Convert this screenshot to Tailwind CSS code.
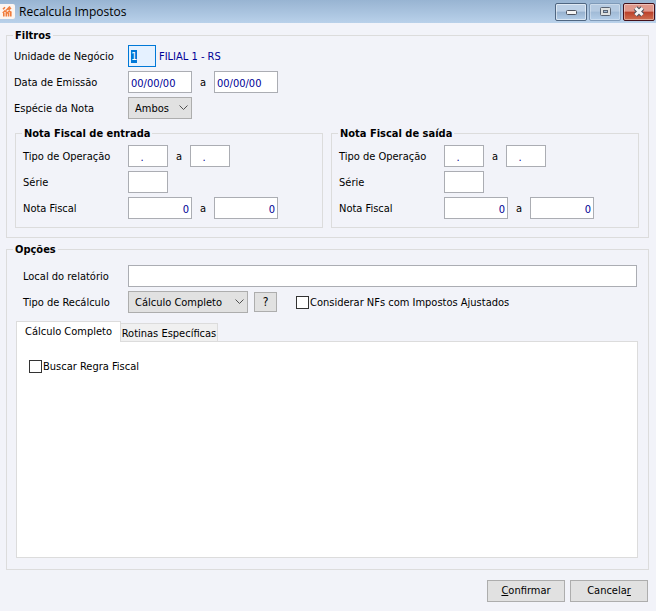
<!DOCTYPE html>
<html lang="pt-BR">
<head>
  <meta charset="UTF-8">
  <meta name="viewport" content="width=device-width, initial-scale=1.0">
  <title>Recalcula Impostos</title>
  <script src="https://cdn.jsdelivr.net/npm/@tailwindcss/browser@4"></script>
</head>
<body class="bg-[#f2f3f9] text-black text-[11px] leading-4 font-['DejaVu_Sans_Condensed','DejaVu_Sans',sans-serif] min-h-screen flex flex-col">

  <!-- Title bar -->
  <header class="h-[23px] shrink-0 flex items-center pr-px bg-linear-to-b from-[#98b4d2] to-[#b9d1ea]">
    <svg class="w-[15px] h-[15px] shrink-0" viewBox="0 0 15 15" aria-hidden="true">
      <rect x="-2" width="17" height="15" rx="2" fill="#fdf5f0"/>
      <g fill="none" stroke="#f07c3c" stroke-width="1.6">
        <path d="M3 5.2 L5 3.2 M6 6.5 L10 2.5 M8.5 6 L11 3.8"/>
        <path d="M2.8 9 L5 6.8 L7.3 9 L9.3 7 L11 8.5"/>
        <path d="M3.8 9 V12.5 M6.3 9 V12.5 M8.6 9 V12.5 M10.8 7.5 V12.5"/>
      </g>
    </svg>
    <h1 class="ml-1 flex-1 text-[12px] font-['Open_Sans',sans-serif]">Recalcula Impostos</h1>
    <div class="flex gap-[2px]">
      <button type="button" aria-label="Minimizar" class="w-8 h-[18px] rounded-[2px] border border-[#4f6681] inset-ring inset-ring-white/50 bg-linear-to-b from-[#bcd0e6] from-45% via-[#96b1ce] via-50% to-[#b4cee9] flex items-center justify-center">
        <svg class="w-3 h-3" viewBox="0 0 12 12"><rect x="1.5" y="4.5" width="10" height="4" rx="1" fill="#f4f4f4" stroke="#4d525e"/></svg>
      </button>
      <button type="button" aria-label="Maximizar" class="w-8 h-[18px] rounded-[2px] border border-[#7f9ab8] inset-ring inset-ring-white/30 bg-linear-to-b from-[#b5cae1] from-45% via-[#a0bad6] via-50% to-[#b4cee9] flex items-center justify-center">
        <svg class="w-3 h-3" viewBox="0 0 12 12">
          <rect x="1.5" y="1.5" width="10" height="8" rx="1" fill="#dfe1e0" stroke="#5a6472"/>
          <rect x="4.5" y="4.5" width="4" height="2" fill="#a0bad6" stroke="#5a6472"/>
        </svg>
      </button>
      <button type="button" aria-label="Fechar" class="w-8 h-[18px] rounded-[2px] border border-[#43101a] inset-ring inset-ring-white/40 bg-linear-to-b from-[#e0988c] from-45% via-[#bb3f29] via-50% to-[#cf6e50] flex items-center justify-center">
        <svg class="w-3 h-3" viewBox="0 0 12 12">
          <path d="M2.5 2 L9.5 9 M9.5 2 L2.5 9" stroke="#4d525e" stroke-width="5"/>
          <path d="M2.5 2 L9.5 9 M9.5 2 L2.5 9" stroke="#f6f6f6" stroke-width="3"/>
        </svg>
      </button>
    </div>
  </header>

  <form class="flex-1 flex flex-col pt-[3px]" onsubmit="return false">

    <fieldset class="ml-[6px] mr-[7px] border border-[#dcdcdc] pt-px pb-[9px] pl-[7px] pr-[9px]">
      <legend class="-ml-px px-[2px] pt-[2px] font-bold">Filtros</legend>

      <div class="grid gap-1">
        <div class="flex items-center">
          <label for="unidade" class="w-[114px] pt-[2px]">Unidade de Negócio</label>
          <input id="unidade" type="text" value="1" class="w-7 h-[22px] border border-[#0078d7] bg-[#e5f1ff] px-[2px] text-[#000096] outline-none selection:bg-[#0078d7] selection:text-white">
          <output for="unidade" class="ml-[3px] pt-[2px] text-[#000096]">FILIAL 1 - RS</output>
        </div>
        <div class="flex items-center">
          <label for="dataDe" class="w-[114px] pt-[2px]">Data de Emissão</label>
          <input id="dataDe" type="text" value="00/00/00" class="w-16 h-[22px] border border-[#abadb3] bg-white px-[2px] pt-[2px] text-[#000096] outline-none">
          <label for="dataAte" class="w-[22px] pt-[2px] text-center">a</label>
          <input id="dataAte" type="text" value="00/00/00" class="w-16 h-[22px] border border-[#abadb3] bg-white px-[2px] pt-[2px] text-[#000096] outline-none">
        </div>
        <div class="flex items-center">
          <label for="especie" class="w-[114px] pt-[2px]">Espécie da Nota</label>
          <div class="relative">
            <select id="especie" class="block w-16 h-[22px] appearance-none border border-[#adadad] bg-[#e1e1e1] pl-[6px] pt-[2px] outline-none">
              <option>Ambos</option>
              <option>Entrada</option>
              <option>Saída</option>
            </select>
            <svg class="absolute right-1 top-[8px] w-[9px] h-[6px] pointer-events-none" viewBox="0 0 9 6" fill="none" stroke="#505050"><path d="M0.5 0.5 L4.5 4.5 L8.5 0.5"/></svg>
          </div>
        </div>
      </div>

      <div class="grid grid-cols-2 gap-2 mt-[5px] ml-px">
        <fieldset class="border border-[#dcdcdc] pt-[3px] pb-2 px-[7px] min-w-0">
          <legend class="-ml-px px-[2px] pt-[2px] font-bold">Nota Fiscal de entrada</legend>
          <div class="grid gap-1">
            <div class="flex items-center">
              <label for="entOpDe" class="w-[105px] pt-[2px]">Tipo de Operação</label>
              <input id="entOpDe" type="text" value="   ." class="w-10 h-[22px] border border-[#abadb3] bg-white px-[2px] pt-[2px] text-[#000096] outline-none">
              <label for="entOpAte" class="w-[22px] pt-[2px] text-center">a</label>
              <input id="entOpAte" type="text" value="   ." class="w-10 h-[22px] border border-[#abadb3] bg-white px-[2px] pt-[2px] text-[#000096] outline-none">
            </div>
            <div class="flex items-center">
              <label for="entSerie" class="w-[105px] pt-[2px]">Série</label>
              <input id="entSerie" type="text" class="w-10 h-[22px] border border-[#abadb3] bg-white px-[2px] pt-[2px] text-[#000096] outline-none">
            </div>
            <div class="flex items-center">
              <label for="entNfDe" class="w-[105px] pt-[2px]">Nota Fiscal</label>
              <input id="entNfDe" type="text" value="0" class="w-16 h-[22px] border border-[#abadb3] bg-white px-[2px] pt-[2px] text-right text-[#000096] outline-none">
              <label for="entNfAte" class="w-[22px] pt-[2px] text-center">a</label>
              <input id="entNfAte" type="text" value="0" class="w-16 h-[22px] border border-[#abadb3] bg-white px-[2px] pt-[2px] text-right text-[#000096] outline-none">
            </div>
          </div>
        </fieldset>

        <fieldset class="border border-[#dcdcdc] pt-[3px] pb-2 px-[7px] min-w-0">
          <legend class="-ml-px px-[2px] pt-[2px] font-bold">Nota Fiscal de saída</legend>
          <div class="grid gap-1">
            <div class="flex items-center">
              <label for="saiOpDe" class="w-[105px] pt-[2px]">Tipo de Operação</label>
              <input id="saiOpDe" type="text" value="   ." class="w-10 h-[22px] border border-[#abadb3] bg-white px-[2px] pt-[2px] text-[#000096] outline-none">
              <label for="saiOpAte" class="w-[22px] pt-[2px] text-center">a</label>
              <input id="saiOpAte" type="text" value="   ." class="w-10 h-[22px] border border-[#abadb3] bg-white px-[2px] pt-[2px] text-[#000096] outline-none">
            </div>
            <div class="flex items-center">
              <label for="saiSerie" class="w-[105px] pt-[2px]">Série</label>
              <input id="saiSerie" type="text" class="w-10 h-[22px] border border-[#abadb3] bg-white px-[2px] pt-[2px] text-[#000096] outline-none">
            </div>
            <div class="flex items-center">
              <label for="saiNfDe" class="w-[105px] pt-[2px]">Nota Fiscal</label>
              <input id="saiNfDe" type="text" value="0" class="w-16 h-[22px] border border-[#abadb3] bg-white px-[2px] pt-[2px] text-right text-[#000096] outline-none">
              <label for="saiNfAte" class="w-[22px] pt-[2px] text-center">a</label>
              <input id="saiNfAte" type="text" value="0" class="w-16 h-[22px] border border-[#abadb3] bg-white px-[2px] pt-[2px] text-right text-[#000096] outline-none">
            </div>
          </div>
        </fieldset>
      </div>
    </fieldset>

    <fieldset class="mt-[2px] ml-[6px] mr-[7px] border border-[#dcdcdc] pt-[7px] pb-[11px] pl-[9px] pr-[10px]">
      <legend class="-ml-[3px] px-[2px] pt-[2px] font-bold">Opções</legend>

      <div class="grid gap-1 pl-[7px] pr-px">
        <div class="flex items-center">
          <label for="local" class="w-[105px] shrink-0 pt-[2px]">Local do relatório</label>
          <input id="local" type="text" class="flex-1 h-[22px] border border-[#abadb3] bg-white px-[2px] text-[#000096] outline-none">
        </div>
        <div class="flex items-center">
          <label for="tipo" class="w-[105px] shrink-0 pt-[2px]">Tipo de Recálculo</label>
          <div class="relative">
            <select id="tipo" class="block w-[120px] h-[22px] appearance-none border border-[#adadad] bg-[#e1e1e1] pl-[6px] pt-[2px] outline-none">
              <option>Cálculo Completo</option>
              <option>Rotinas Específicas</option>
            </select>
            <svg class="absolute right-1 top-[8px] w-[9px] h-[6px] pointer-events-none" viewBox="0 0 9 6" fill="none" stroke="#505050"><path d="M0.5 0.5 L4.5 4.5 L8.5 0.5"/></svg>
          </div>
          <button type="button" class="ml-[6px] w-[23px] h-5 border border-[#adadad] bg-[#e1e1e1] hover:bg-[#e5f1fb] text-[12px]">?</button>
          <label class="ml-[19px] flex items-center gap-px">
            <input type="checkbox" class="appearance-none w-[13px] h-[13px] border border-[#333333] bg-white checked:bg-[#0078d7]">
            <span class="pt-[2px]">Considerar NFs com Impostos Ajustados</span>
          </label>
        </div>
      </div>

      <!-- Tabs -->
      <div role="tablist" class="flex items-end mt-2">
        <button type="button" role="tab" aria-selected="true" aria-controls="painel" class="relative -mb-px w-[105px] h-[21px] border border-b-0 border-[#dcdcdc] bg-white">Cálculo Completo</button>
        <button type="button" role="tab" aria-selected="false" class="h-[18px] border border-l-0 border-b-0 border-[#dcdcdc] bg-[#f0f0f0] w-[97px] pt-[2px]">Rotinas Específicas</button>
      </div>
      <div id="painel" role="tabpanel" class="min-h-[217px] border border-[#dcdcdc] bg-white px-3 py-[15px]">
        <label class="flex items-center gap-px">
          <input type="checkbox" class="appearance-none w-[13px] h-[13px] border border-[#333333] bg-white checked:bg-[#0078d7]">
          <span class="pt-[2px]">Buscar Regra Fiscal</span>
        </label>
      </div>
    </fieldset>

    <div class="flex justify-end gap-[5px] pt-[10px] pb-[9px] pr-2">
      <button type="submit" class="w-[78px] h-[22px] border border-[#adadad] bg-[#e1e1e1] hover:bg-[#e5f1fb]"><u>C</u>onfirmar</button>
      <button type="button" class="w-[78px] h-[22px] border border-[#adadad] bg-[#e1e1e1] hover:bg-[#e5f1fb]">Cancela<u>r</u></button>
    </div>
  </form>

  <script>
    // the first field starts focused with its value selected
    const unidade = document.getElementById('unidade');
    unidade.focus();
    unidade.select();
  </script>

</body>
</html>
